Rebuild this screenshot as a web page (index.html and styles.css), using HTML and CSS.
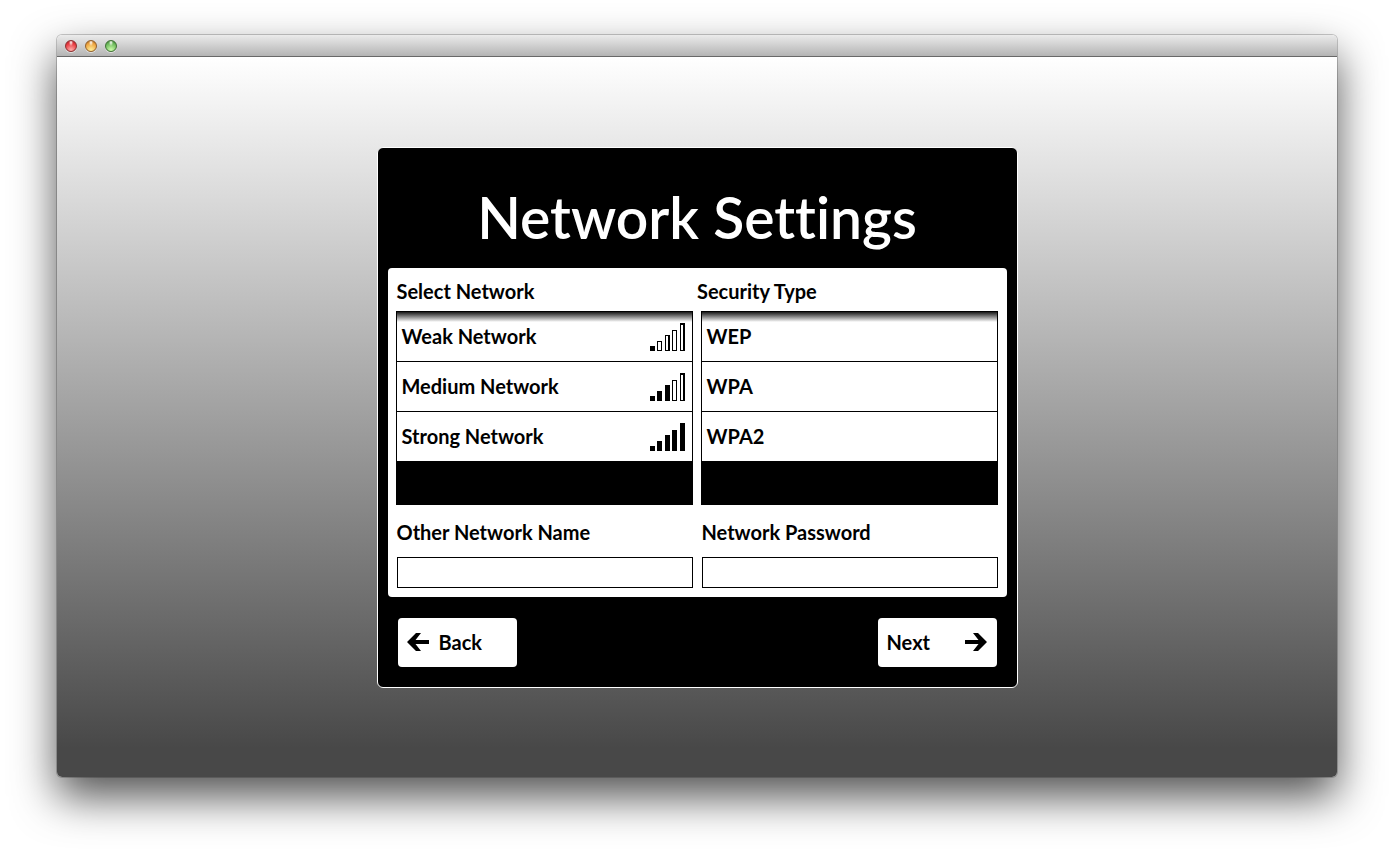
FILE: index.html
```html
<!DOCTYPE html>
<html lang="en">
<head>
<meta charset="utf-8">
<title>Network Settings</title>
<link rel="stylesheet" href="styles.css">
</head>
<body>
<div class="window">
  <header class="titlebar">
    <button class="light light-close" type="button" aria-label="Close"></button>
    <button class="light light-minimize" type="button" aria-label="Minimize"></button>
    <button class="light light-zoom" type="button" aria-label="Zoom"></button>
  </header>
  <main class="desktop">
    <form class="dialog">
      <h1 class="title">Network Settings</h1>
      <section class="panel">
        <div class="headings">
          <h2 class="label" id="net-label">Select Network</h2>
          <h2 class="label" id="sec-label">Security Type</h2>
        </div>
        <div class="lists">
          <ul class="list" aria-labelledby="net-label">
            <li><button class="row" type="button">Weak Network
              <svg class="signal" width="35" height="28" viewBox="0 0 35 28" shape-rendering="crispEdges" aria-hidden="true"><path fill-rule="evenodd" d="M0 23h5v5H0zM7 18h5v10H7zM8 19v8h3v-8zM15 12h5v16h-5zM16 13v14h2V13zM22 7h5v21h-5zM23 8v19h3V8zM30 0h5v28h-5zM31 2v25h2V2z"/></svg></button></li>
            <li><button class="row" type="button">Medium Network
              <svg class="signal" width="35" height="28" viewBox="0 0 35 28" shape-rendering="crispEdges" aria-hidden="true"><path fill-rule="evenodd" d="M0 23h5v5H0zM7 18h5v10H7zM15 12h5v16h-5zM22 7h5v21h-5zM23 8v19h3V8zM30 0h5v28h-5zM31 2v25h2V2z"/></svg></button></li>
            <li><button class="row" type="button">Strong Network
              <svg class="signal" width="35" height="28" viewBox="0 0 35 28" shape-rendering="crispEdges" aria-hidden="true"><path d="M0 23h5v5H0zM7 18h5v10H7zM15 12h5v16h-5zM22 7h5v21h-5zM30 0h5v28h-5z"/></svg></button></li>
          </ul>
          <ul class="list" aria-labelledby="sec-label">
            <li><button class="row" type="button">WEP</button></li>
            <li><button class="row" type="button">WPA</button></li>
            <li><button class="row" type="button">WPA2</button></li>
          </ul>
        </div>
        <div class="fields">
          <div class="field">
            <label class="label" for="name">Other Network Name</label>
            <input class="input" id="name" type="text">
          </div>
          <div class="field">
            <label class="label" for="password">Network Password</label>
            <input class="input" id="password" type="password">
          </div>
        </div>
      </section>
      <div class="actions">
        <button class="action" type="button">
          <svg width="22" height="18" viewBox="0 0 22 18" aria-hidden="true"><path d="M0 9 9 0h5L8.500 7H22v4H8.500L14 18H9z"/></svg>
          Back
        </button>
        <button class="action action-next" type="button">
          Next
          <svg width="22" height="18" viewBox="0 0 22 18" aria-hidden="true"><path d="M22 9 13 0H8l5.500 7H0v4h13.500L8 18h5z"/></svg>
        </button>
      </div>
    </form>
  </main>
</div>
</body>
</html>
```
FILE: styles.css
```css
* { box-sizing: border-box; }

body {
  display: flex;
  min-height: 100vh;
  margin: 0;
  padding: 35px 57px 79px;
  background: #fff;
  color: #000;
  font: 700 20px/28px Lato, "Liberation Sans", sans-serif;
  font-variant-ligatures: none;
}

button, input {
  margin: 0;
  color: inherit;
  font: inherit;
}

.window {
  display: flex;
  flex: 1;
  flex-direction: column;
  border-radius: 5px;
  box-shadow: 0 0 0 1px rgba(0, 0, 0, .2), 0 20px 44px rgba(0, 0, 0, .68);
  background: #fff;
}

.titlebar {
  display: flex;
  align-items: center;
  gap: 8px;
  height: 22px;
  padding: 0 8px;
  border-bottom: 1px solid #686868;
  border-radius: 5px 5px 0 0;
  background: linear-gradient(#ebebeb, #b4b4b4);
}

.light {
  width: 12px;
  height: 12px;
  padding: 0;
  border: 1px solid;
  border-radius: 50%;
  box-shadow: 0 1px 0 rgba(255, 255, 255, .5);
}

.light-close {
  border-color: #8c2f2f;
  background: radial-gradient(ellipse at 50% 15%, #fff 0, transparent 30%), radial-gradient(circle at 50% 90%, #ffb0ac, #e8393f 65%, #9c2229);
}

.light-minimize {
  border-color: #92602a;
  background: radial-gradient(ellipse at 50% 15%, #fff 0, transparent 30%), radial-gradient(circle at 50% 90%, #fff09a, #eea43f 65%, #98591c);
}

.light-zoom {
  border-color: #3f7134;
  background: radial-gradient(ellipse at 50% 15%, #fff 0, transparent 30%), radial-gradient(circle at 50% 90%, #ceffac, #6dba5c 65%, #35702c);
}

.desktop {
  display: grid;
  flex: 1;
  place-items: center;
  border-radius: 0 0 5px 5px;
  background: linear-gradient(#fff, #484848 96%);
}

.dialog {
  width: 100%;
  max-width: 641px;
  padding: 0 10px 20px;
  border: 1px solid #fff;
  border-radius: 6px;
  background: #000;
}

.title {
  margin: 0;
  padding: 29px 0 11px;
  color: #fff;
  font-size: 57px;
  font-weight: 600;
  line-height: 80px;
  text-align: center;
}

.panel {
  padding-bottom: 9px;
  border-radius: 4px;
  background: #fff;
}

.headings {
  display: grid;
  grid-template-columns: 1fr 1fr;
  padding: 9px 9px 6px;
}

.label {
  margin: 0;
  font-size: 20px;
  font-weight: 700;
}

.lists {
  display: grid;
  grid-template-columns: 1fr 1fr;
  gap: 8px;
  padding: 0 9px 0 8px;
}

.list {
  position: relative;
  min-height: 194px;
  margin: 0;
  padding: 0;
  border: 1px solid #000;
  background: #000;
  list-style: none;
}

.list::before {
  position: absolute;
  inset: 0 0 auto;
  height: 10px;
  background: linear-gradient(rgba(0, 0, 0, .9), transparent);
  content: "";
  pointer-events: none;
}

.row {
  display: flex;
  align-items: center;
  justify-content: space-between;
  width: 100%;
  height: 50px;
  padding: 0 7px 0 5px;
  border: 0;
  border-bottom: 1px solid #000;
  background: #fff;
  text-align: left;
}

.signal { margin-top: 2px; }

.fields {
  display: grid;
  grid-template-columns: 1fr 1fr;
  gap: 9px;
  padding: 13px 9px 0;
}

.field {
  display: flex;
  flex-direction: column;
  gap: 11px;
}

.input {
  width: 100%;
  height: 31px;
  padding: 0 5px;
  border: 1px solid #000;
  border-radius: 0;
  background: #fff;
}

.actions {
  display: flex;
  justify-content: space-between;
  padding: 21px 10px 0;
}

.action {
  display: flex;
  align-items: center;
  gap: 10px;
  width: 119px;
  height: 49px;
  padding: 0 10px 0 9px;
  border: 0;
  border-radius: 4px;
  background: #fff;
}

.action-next { justify-content: space-between; }
```
